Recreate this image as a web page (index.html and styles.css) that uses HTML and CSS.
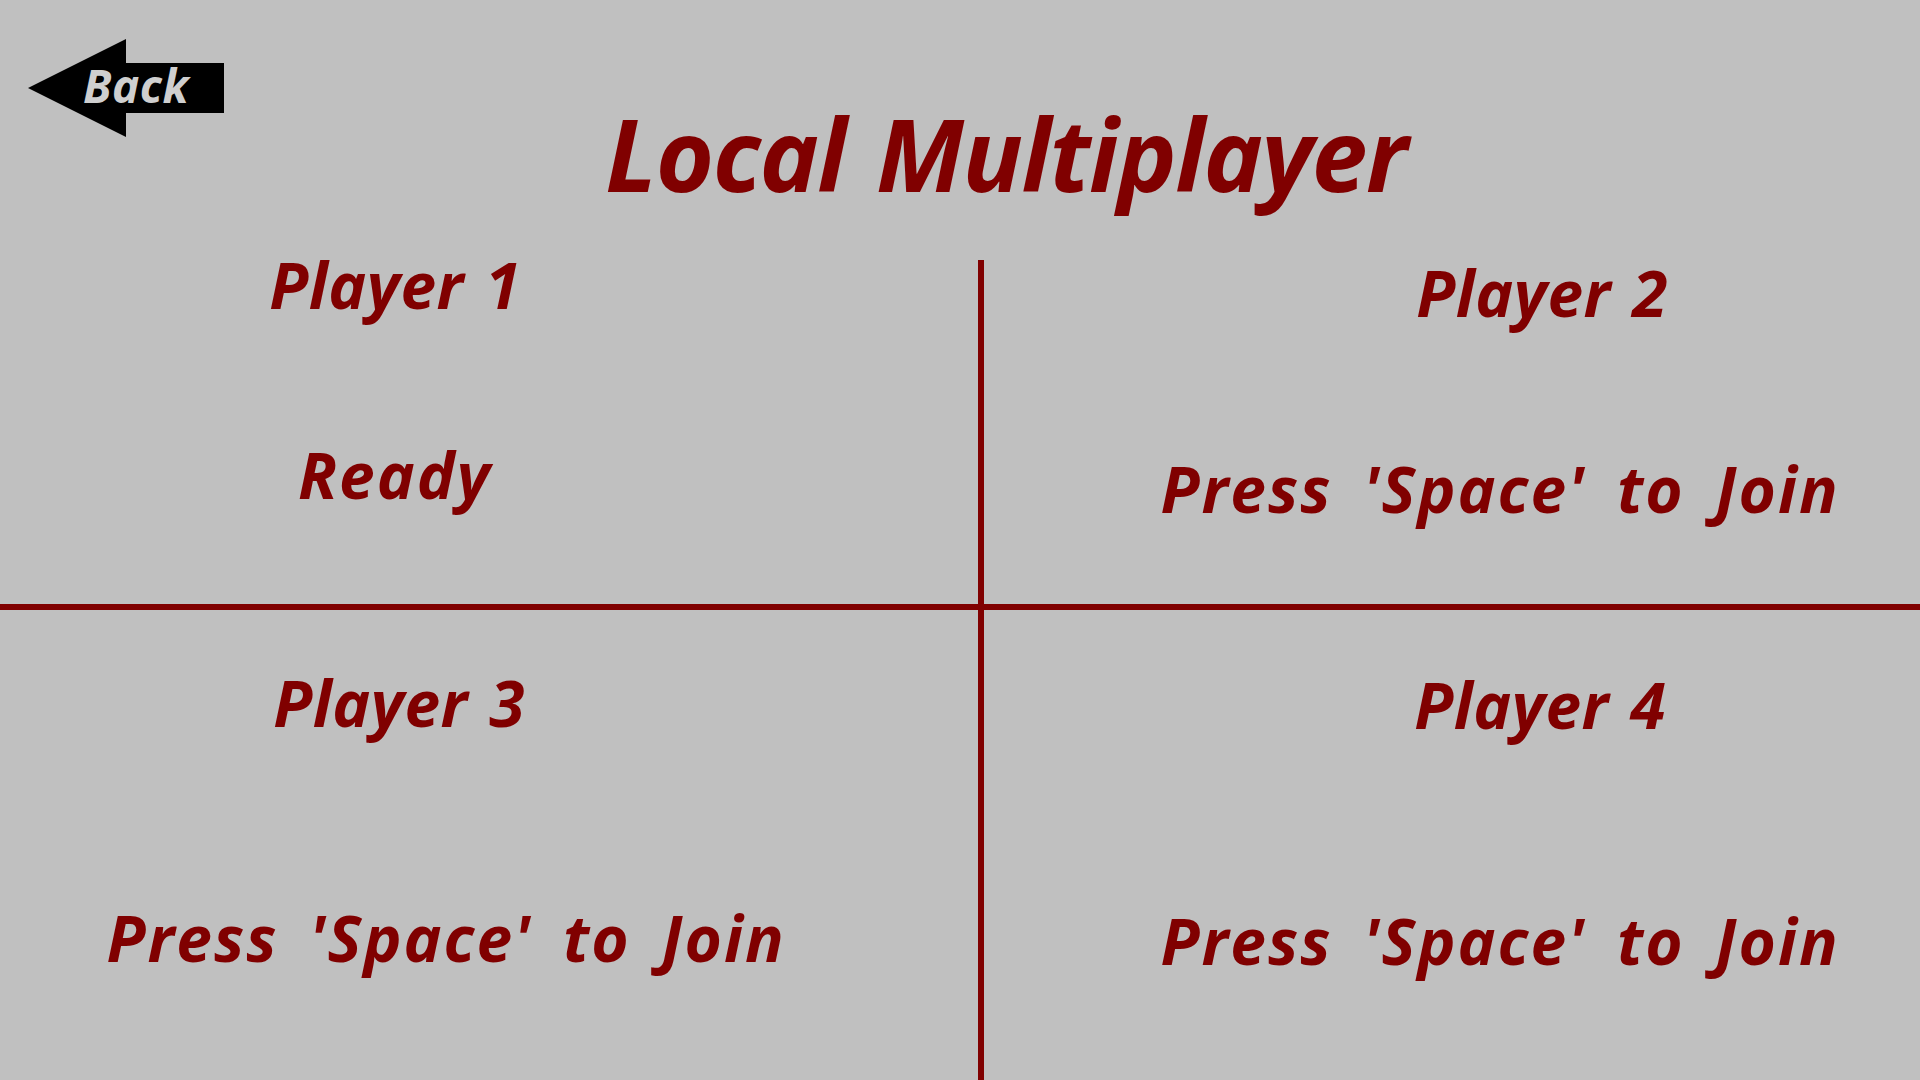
FILE: index.html
```html
<!DOCTYPE html>
<html lang="en">
<head>
    <meta charset="UTF-8">
    <meta name="viewport" content="width=device-width, initial-scale=1.0">
    <title>Local Multiplayer</title>
    <link rel="stylesheet" href="styles.css">
</head>
<body>
    <!-- Top bar: back arrow + screen title -->
    <div class="header">
        <a class="back" href="#">Back</a>
        <h1 class="title">Local Multiplayer</h1>
    </div>

    <!-- 2x2 player slots split by red lines -->
    <div class="board">
        <div class="slot slot-left row-top">
            <div class="name p1">Player 1</div>
            <div class="status ready">Ready</div>
        </div>
        <div class="vline"></div>
        <div class="slot slot-right row-top">
            <div class="name p2">Player 2</div>
            <div class="status join-top">Press 'Space' to Join</div>
        </div>
        <div class="hline"></div>
        <div class="slot slot-left row-bottom">
            <div class="name p3">Player 3</div>
            <div class="status join-left">Press 'Space' to Join</div>
        </div>
        <div class="slot slot-right row-bottom">
            <div class="name p4">Player 4</div>
            <div class="status join-bottom">Press 'Space' to Join</div>
        </div>
    </div>
</body>
</html>
```

FILE: styles.css
```css
html, body {
    margin: 0;
    height: 100%;
}
body {
    background-color: #c0c0c0;
    color: #800000;
    font-family: "Open Sans", "DejaVu Sans", sans-serif;
    font-style: italic;
    font-weight: 700;
    overflow: hidden;
}

/* header */
.header {
    display: grid;
    height: 240px;
}
.header > * {
    grid-area: 1 / 1;
}
.back {
    justify-self: start;
    align-self: start;
    margin: 39px 0 0 28px;
    width: 196px;
    height: 98px;
    box-sizing: border-box;
    padding: 23px 0 0 55px;
    background-color: #000;
    color: #cfcfcf;
    font-size: 46px;
    line-height: 1;
    letter-spacing: 0.5px;
    text-decoration: none;
    clip-path: polygon(0 50%, 50% 0, 50% 24.5%, 100% 24.5%, 100% 75.5%, 50% 75.5%, 50% 100%);
}
.title {
    margin: 0;
    padding: 103px 0 0 92px;
    text-align: center;
    font-size: 100px;
    line-height: 1;
    letter-spacing: -1.5px;
    word-spacing: 6px;
    font-weight: 700;
}

/* board */
.board {
    display: grid;
    grid-template-columns: 978px 6px 1fr;
    grid-template-rows: 364px 6px 1fr;
    height: 840px;
}
.vline {
    grid-column: 2;
    grid-row: 1 / 4;
    margin-top: 20px;
    background-color: #800000;
}
.hline {
    grid-column: 1 / 4;
    grid-row: 2;
    background-color: #800000;
}
.slot {
    display: flex;
    flex-direction: column;
    text-align: center;
    font-size: 64px;
    line-height: 1;
}
.slot-left { grid-column: 1; }
.slot-right { grid-column: 3; }
.row-top { grid-row: 1; }
.row-bottom { grid-row: 3; }

.name {
    letter-spacing: 0.5px;
    word-spacing: 4px;
}
.status {
    letter-spacing: 2px;
    word-spacing: 12px;
}

.name.p1 { padding: 13px 188px 0 0; }
.status.ready { padding: 126px 188px 0 0; }
.name.p2 { padding: 21px 0 0 180px; }
.status.join-top { padding: 132px 0 0 96px; }
.name.p3 { padding: 61px 180px 0 0; }
.status.join-left { padding: 171px 86px 0 0; }
.name.p4 { padding: 63px 0 0 176px; }
.status.join-bottom { padding: 172px 0 0 96px; }
```
